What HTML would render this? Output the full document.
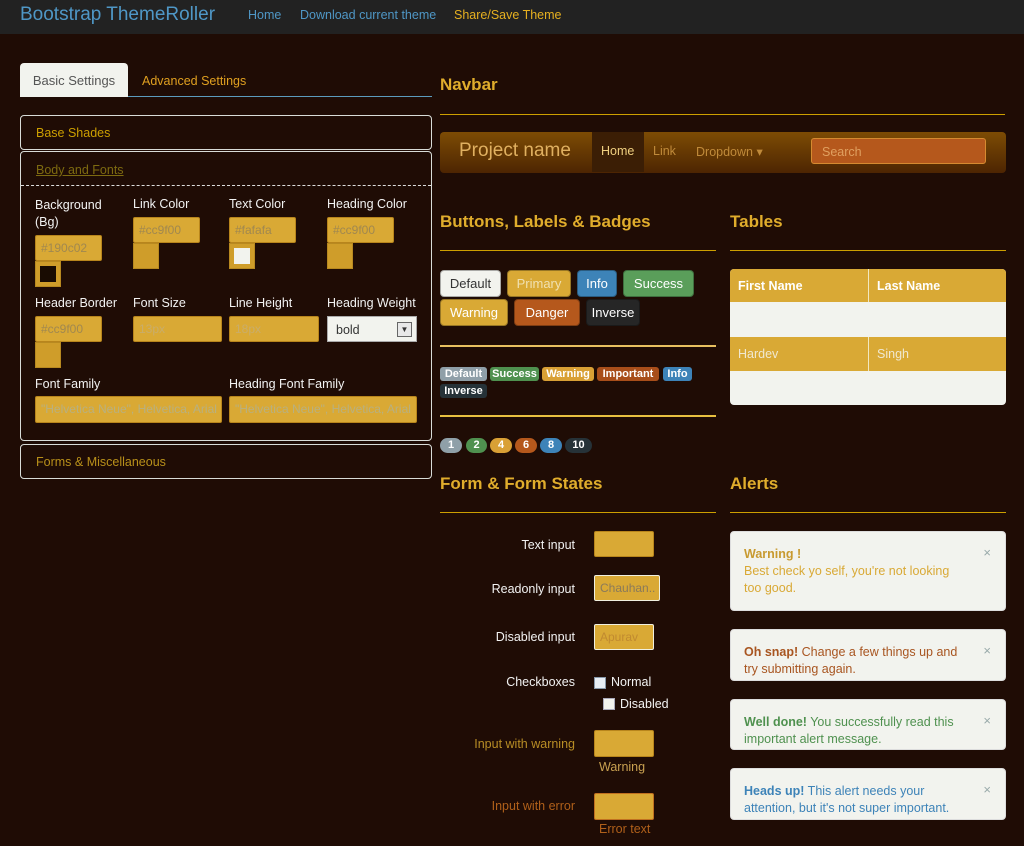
<!DOCTYPE html>
<html><head><meta charset="utf-8">
<style>
*{box-sizing:border-box;margin:0;padding:0}
body{width:1024px;height:846px;background:#1f0c05;font-family:"Liberation Sans",sans-serif;font-size:12.5px;color:#f2f2f2;position:relative;overflow:hidden}
.a{position:absolute;white-space:nowrap}
.inp{position:absolute;background:#d9a935;border:1px solid #b8851c;border-radius:2px;color:#a08850;font-size:12px;padding:5px 5px;line-height:14px;overflow:hidden;white-space:nowrap}
.sw{position:absolute;background:#cf9d2a;border:1px solid #b88920}
.box{position:absolute;border:1px solid #d8dcd8;border-radius:4px}
.h{position:absolute;color:#e0ad2c;font-weight:bold;font-size:17px}
.ln{position:absolute;height:1px;background:#cc9f00}
.btn{position:absolute;height:27px;border-radius:4px;font-size:13px;line-height:25px;text-align:center;color:#fff;border:1px solid rgba(0,0,0,.3)}
.lb{position:absolute;height:14px;border-radius:3px;font-size:11px;font-weight:bold;line-height:14px;text-align:center;color:#fff;overflow:hidden}
.bd{position:absolute;height:15px;border-radius:8px;font-size:11px;font-weight:bold;line-height:15px;text-align:center;color:#fff}
.fl{position:absolute;width:140px;text-align:right;left:435px;font-size:12.5px}
.al{position:absolute;left:730px;width:276px;background:#f2f3ee;border:1px solid #ddd;border-radius:4px;padding:14px 38px 13px 13px;font-size:12.5px;line-height:17px}
.x{position:absolute;right:14px;top:12px;color:#9aa;font-size:13px}
</style></head><body>
<div class="a" style="left:0;top:0;width:1024px;height:34px;background:#222"></div>
<div class="a" style="left:20px;top:4px;font-size:19px;color:#4f97c6">Bootstrap ThemeRoller</div>
<div class="a" style="left:248px;top:8px;font-size:12.5px;color:#4f97c6">Home</div>
<div class="a" style="left:300px;top:8px;font-size:12.5px;color:#4f97c6">Download current theme</div>
<div class="a" style="left:454px;top:8px;font-size:12.5px;color:#e6b020">Share/Save Theme</div>

<div class="a" style="left:20px;top:63px;width:108px;height:34px;background:#f2f3ee;border-radius:4px 4px 0 0;color:#555;font-size:13px;line-height:35px;text-align:center">Basic Settings</div>
<div class="a" style="left:142px;top:74px;font-size:12.5px;color:#e0a020">Advanced Settings</div>
<div class="a" style="left:128px;top:96px;width:304px;height:1px;background:#5b9bbd"></div>

<div class="box" style="left:20px;top:115px;width:412px;height:35px"></div>
<div class="a" style="left:36px;top:126px;color:#cc9f00">Base Shades</div>
<div class="box" style="left:20px;top:151px;width:412px;height:290px"></div>
<div class="a" style="left:36px;top:163px;color:#7d6a10;text-decoration:underline">Body and Fonts</div>
<div class="a" style="left:21px;top:185px;width:410px;border-top:1px dashed #ddd"></div>

<div class="a" style="left:35px;top:197px;line-height:17px">Background<br>(Bg)</div>
<div class="a" style="left:133px;top:197px">Link Color</div>
<div class="a" style="left:229px;top:197px">Text Color</div>
<div class="a" style="left:327px;top:197px">Heading Color</div>
<div class="inp" style="left:35px;top:235px;width:67px;height:26px">#190c02</div>
<div class="sw" style="left:35px;top:261px;width:26px;height:26px"><div style="margin:4px;width:16px;height:16px;background:#190c02"></div></div>
<div class="inp" style="left:133px;top:217px;width:67px;height:26px">#cc9f00</div>
<div class="sw" style="left:133px;top:243px;width:26px;height:26px"></div>
<div class="inp" style="left:229px;top:217px;width:67px;height:26px">#fafafa</div>
<div class="sw" style="left:229px;top:243px;width:26px;height:26px"><div style="margin:4px;width:16px;height:16px;background:#f2f3ee"></div></div>
<div class="inp" style="left:327px;top:217px;width:67px;height:26px">#cc9f00</div>
<div class="sw" style="left:327px;top:243px;width:26px;height:26px"></div>

<div class="a" style="left:35px;top:296px">Header Border</div>
<div class="a" style="left:133px;top:296px">Font Size</div>
<div class="a" style="left:229px;top:296px">Line Height</div>
<div class="a" style="left:327px;top:296px">Heading Weight</div>
<div class="inp" style="left:35px;top:316px;width:67px;height:26px">#cc9f00</div>
<div class="sw" style="left:35px;top:342px;width:26px;height:26px"></div>
<div class="inp" style="left:133px;top:316px;width:89px;height:26px;color:#c9ad6a">13px</div>
<div class="inp" style="left:229px;top:316px;width:90px;height:26px;color:#c9ad6a">18px</div>
<div class="a" style="left:327px;top:316px;width:90px;height:26px;background:#f2f3ee;border:1px solid #aaa;color:#333;padding:6px 8px">bold<div style="position:absolute;right:4px;top:5px;width:15px;height:15px;border:1px solid #666;background:#e8e8e8;font-size:8px;text-align:center;line-height:14px">▼</div></div>

<div class="a" style="left:35px;top:377px">Font Family</div>
<div class="a" style="left:229px;top:377px">Heading Font Family</div>
<div class="inp" style="left:35px;top:396px;width:187px;height:27px;color:#b8b080">"Helvetica Neue", Helvetica, Arial</div>
<div class="inp" style="left:229px;top:396px;width:188px;height:27px;color:#b8b080">"Helvetica Neue", Helvetica, Arial</div>

<div class="box" style="left:20px;top:444px;width:412px;height:35px"></div>
<div class="a" style="left:36px;top:455px;color:#b8901a">Forms &amp; Miscellaneous</div>

<div class="h" style="left:440px;top:75px">Navbar</div>
<div class="ln" style="left:440px;top:114px;width:565px"></div>
<div class="a" style="left:440px;top:132px;width:566px;height:41px;border-radius:4px;background:linear-gradient(#7d4c04,#4d2502)"></div>
<div class="a" style="left:459px;top:140px;font-size:19px;color:#e0b060">Project name</div>
<div class="a" style="left:592px;top:132px;width:52px;height:40px;background:#3b1e05"></div>
<div class="a" style="left:601px;top:144px;font-size:12.5px;color:#f0d080">Home</div>
<div class="a" style="left:653px;top:144px;color:#c08a3a">Link</div>
<div class="a" style="left:696px;top:144px;color:#c08a3a">Dropdown ▾</div>
<div class="a" style="left:811px;top:138px;width:175px;height:26px;background:#b5581c;border:1px solid #d68a30;border-radius:3px;color:#e0a060;padding:6px 10px">Search</div>

<div class="h" style="left:440px;top:212px">Buttons, Labels &amp; Badges</div>
<div class="h" style="left:730px;top:212px">Tables</div>
<div class="ln" style="left:440px;top:250px;width:276px"></div>
<div class="ln" style="left:730px;top:250px;width:276px"></div>
<div class="btn" style="left:440px;top:270px;width:61px;background:#f2f3ee;color:#333">Default</div>
<div class="btn" style="left:507px;top:270px;width:64px;background:#d9a935;color:#f0e0b0">Primary</div>
<div class="btn" style="left:577px;top:270px;width:40px;background:#3d83b8">Info</div>
<div class="btn" style="left:623px;top:270px;width:71px;background:#5a9e5a">Success</div>
<div class="btn" style="left:440px;top:299px;width:68px;background:#d9a935">Warning</div>
<div class="btn" style="left:514px;top:299px;width:66px;background:#b5581c">Danger</div>
<div class="btn" style="left:586px;top:299px;width:54px;background:#262626">Inverse</div>
<div class="ln" style="left:440px;top:345px;width:276px;background:#e8c060;height:2px"></div>
<div class="lb" style="left:440px;top:367px;width:47px;background:#8f9fa8">Default</div>
<div class="lb" style="left:490px;top:367px;width:49px;background:#4f914f">Success</div>
<div class="lb" style="left:542px;top:367px;width:52px;background:#d9a035">Warning</div>
<div class="lb" style="left:597px;top:367px;width:62px;background:#a84e1a">Important</div>
<div class="lb" style="left:663px;top:367px;width:29px;background:#3d83b8">Info</div>
<div class="lb" style="left:440px;top:384px;width:47px;background:#263238">Inverse</div>
<div class="ln" style="left:440px;top:415px;width:276px;background:#e8c040;height:2px"></div>
<div class="bd" style="left:440px;top:438px;width:22px;background:#8fa0a8">1</div>
<div class="bd" style="left:466px;top:438px;width:21px;background:#4f914f">2</div>
<div class="bd" style="left:490px;top:438px;width:22px;background:#d9a035">4</div>
<div class="bd" style="left:515px;top:438px;width:22px;background:#b5581c">6</div>
<div class="bd" style="left:540px;top:438px;width:22px;background:#3d83b8">8</div>
<div class="bd" style="left:565px;top:438px;width:27px;background:#263238">10</div>

<div class="a" style="left:730px;top:269px;width:276px;height:136px;background:#f2f3ee;border-radius:4px;overflow:hidden">
<div style="height:33px;background:#d9a935;font-weight:bold;color:#fff;line-height:35px;padding-left:8px;position:relative">First Name<span style="position:absolute;left:147px">Last Name</span></div>
<div style="height:35px"></div>
<div style="height:34px;background:#d9a935;color:#f0e8d0;line-height:34px;padding-left:8px;position:relative">Hardev<span style="position:absolute;left:147px">Singh</span></div>
<div style="position:absolute;left:138px;top:0;width:1px;height:33px;background:#f2e8c0"></div>
<div style="position:absolute;left:138px;top:68px;width:1px;height:34px;background:#f2e8c0"></div>
</div>

<div class="h" style="left:440px;top:474px">Form &amp; Form States</div>
<div class="h" style="left:730px;top:474px">Alerts</div>
<div class="ln" style="left:440px;top:512px;width:276px"></div>
<div class="ln" style="left:730px;top:512px;width:276px"></div>
<div class="fl" style="top:538px">Text input</div>
<div class="inp" style="left:594px;top:531px;width:60px;height:26px"></div>
<div class="fl" style="top:582px">Readonly input</div>
<div class="inp" style="left:594px;top:575px;width:66px;height:26px;border-color:#f0f0e0;color:#8a7a5a">Chauhan..</div>
<div class="fl" style="top:630px">Disabled input</div>
<div class="inp" style="left:594px;top:624px;width:60px;height:26px;border-color:#f0f0e0;color:#c08a30">Apurav</div>
<div class="fl" style="top:675px">Checkboxes</div>
<div class="a" style="left:594px;top:677px;width:12px;height:12px;background:#e8eef4;border:1px solid #89a"></div>
<div class="a" style="left:611px;top:675px">Normal</div>
<div class="a" style="left:603px;top:698px;width:12px;height:12px;background:#f2f3ee;border:1px solid #aab"></div>
<div class="a" style="left:620px;top:697px">Disabled</div>
<div class="fl" style="top:737px;color:#b88d25">Input with warning</div>
<div class="inp" style="left:594px;top:730px;width:60px;height:27px"></div>
<div class="a" style="left:599px;top:760px;color:#c8a050">Warning</div>
<div class="fl" style="top:799px;color:#b0601a">Input with error</div>
<div class="inp" style="left:594px;top:793px;width:60px;height:27px;border-color:#c07020"></div>
<div class="a" style="left:599px;top:822px;color:#b0601a">Error text</div>

<div class="al" style="top:531px;height:80px;color:#d9a935"><b style="color:#c89a30">Warning !</b><br>Best check yo self, you're not looking too good.<span class="x">×</span></div>
<div class="al" style="top:629px;height:52px;color:#a85520"><b>Oh snap!</b> Change a few things up and try submitting again.<span class="x">×</span></div>
<div class="al" style="top:699px;height:51px;color:#4f914f"><b>Well done!</b> You successfully read this important alert message.<span class="x">×</span></div>
<div class="al" style="top:768px;height:52px;color:#3d83b8"><b>Heads up!</b> This alert needs your attention, but it's not super important.<span class="x">×</span></div>
</body></html>
